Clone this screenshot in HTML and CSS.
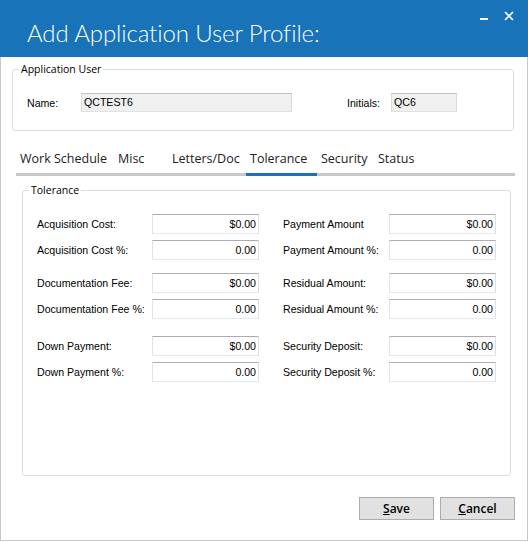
FILE: index.html
```html
<!DOCTYPE html>
<html>
<head>
    <title>Add Application User Profile</title>
    <meta charset='UTF-8'>
    <link rel="stylesheet" href="styles.css">
</head>
<body>
    <div class='window'>
        <div class='titlebar'>
            <h1 class='title'>Add Application User Profile:</h1>
            <div class='controls'>
                <span class='ctl-min'></span>
                <svg class='ctl-close' width='10' height='10' viewBox='0 0 10 10'>
                    <path d='M1 1 L9 9 M9 1 L1 9' stroke='#fff' stroke-width='1.7' fill='none'/>
                </svg>
            </div>
        </div>

        <fieldset class='group group-user'>
            <legend>Application User</legend>
            <div class='user-row'>
                <label class='lbl lbl-name'>Name:</label>
                <div class='field field-ro field-name'>QCTEST6</div>
                <label class='lbl lbl-initials'>Initials:</label>
                <div class='field field-ro field-initials'>QC6</div>
            </div>
        </fieldset>

        <div class='tabs'>
            <span class='tab tab-work'>Work Schedule</span>
            <span class='tab tab-misc'>Misc</span>
            <span class='tab tab-letters'>Letters/Doc</span>
            <span class='tab tab-tol tab-active'>Tolerance</span>
            <span class='tab tab-sec'>Security</span>
            <span class='tab tab-status'>Status</span>
        </div>

        <fieldset class='group group-tol'>
            <legend>Tolerance</legend>
            <div class='tol-body'>
                <div class='tol-group'>
                    <div class='tol-row'>
                        <label class='lbl lbl-left'>Acquisition Cost:</label>
                        <div class='field'>$0.00</div>
                        <label class='lbl lbl-right'>Payment Amount</label>
                        <div class='field'>$0.00</div>
                    </div>
                    <div class='tol-row'>
                        <label class='lbl lbl-left'>Acquisition Cost %:</label>
                        <div class='field'>0.00</div>
                        <label class='lbl lbl-right'>Payment Amount %:</label>
                        <div class='field'>0.00</div>
                    </div>
                </div>
                <div class='tol-group tol-group-2'>
                    <div class='tol-row'>
                        <label class='lbl lbl-left'>Documentation Fee:</label>
                        <div class='field'>$0.00</div>
                        <label class='lbl lbl-right'>Residual Amount:</label>
                        <div class='field'>$0.00</div>
                    </div>
                    <div class='tol-row'>
                        <label class='lbl lbl-left'>Documentation Fee %:</label>
                        <div class='field'>0.00</div>
                        <label class='lbl lbl-right'>Residual Amount %:</label>
                        <div class='field'>0.00</div>
                    </div>
                </div>
                <div class='tol-group tol-group-3'>
                    <div class='tol-row'>
                        <label class='lbl lbl-left'>Down Payment:</label>
                        <div class='field'>$0.00</div>
                        <label class='lbl lbl-right'>Security Deposit:</label>
                        <div class='field'>$0.00</div>
                    </div>
                    <div class='tol-row'>
                        <label class='lbl lbl-left'>Down Payment %:</label>
                        <div class='field'>0.00</div>
                        <label class='lbl lbl-right'>Security Deposit %:</label>
                        <div class='field'>0.00</div>
                    </div>
                </div>
            </div>
        </fieldset>

        <div class='buttons'>
            <button class='btn'><u>S</u>ave</button>
            <button class='btn'><u>C</u>ancel</button>
        </div>
    </div>
</body>
</html>
```

FILE: styles.css
```css
body { margin: 0; background: #fff; font-family: "Liberation Sans", Arial, sans-serif; font-size: 10.6px; color: #000; }

.window {
    width: 528px;
    height: 541px;
    box-sizing: border-box;
    border: 1px solid #c9c9c9;
    border-top: 0;
}

/* title bar */
.titlebar { height: 57px; margin: 0 -1px; background: #1873b9; display: flex; justify-content: space-between; }
.title { margin: 0; padding: 21px 0 0 27px; font: 300 24px/24px Lato, "Open Sans", sans-serif; letter-spacing: -0.1px; color: #fff; }
.controls { display: flex; align-items: flex-start; gap: 16px; padding: 11px 14px 0 0; }
.ctl-min { width: 8px; height: 2px; margin-top: 7px; background: #fff; }
.ctl-close { display: block; }

/* group boxes */
.group { margin: 0; padding: 0; min-width: 0; border: 1px solid #d5dfe5; border-radius: 3px; }
.group legend { margin-left: 6px; padding: 0 2px; font: 10.5px/14px "Open Sans", sans-serif; }
.group-user { margin: 5px 13px 0 11px; }
.group-tol { margin: 7px 16px 0 21px; }

.user-row { display: flex; align-items: center; padding: 17px 0 18px 14px; }
.lbl-name { width: 54px; }
.lbl-initials { width: 44px; margin-left: 55px; }

/* text boxes */
.field {
    height: 20px;
    box-sizing: border-box;
    width: 107px;
    padding: 0 2px;
    line-height: 18px;
    text-align: right;
    background: #fff;
    border: 1px solid;
    border-color: #abadb3 #dbdfe6 #e3e9ef #e2e3ea;
}
.field-ro { height: 19px; line-height: 17px; text-align: left; background: #f0f0f0; border-color: #c4c4c4 #dadada #e2e2e2 #dadada; }
.field-name { width: 211px; }
.field-initials { width: 66px; }

/* tabs */
.tabs { display: flex; margin: 14px 12px 0 15px; border-bottom: 3px solid #c8c8c8; font: 12.5px/28px "Open Sans", sans-serif; color: #222; }
.tab { box-sizing: border-box; padding-left: 4px; }
.tab-work { width: 98px; }
.tab-misc { width: 54px; }
.tab-letters { width: 78px; }
.tab-tol { width: 71px; }
.tab-sec { width: 57px; }
.tab-active { border-bottom: 3px solid #1873b9; margin-bottom: -3px; }

/* tolerance rows */
.tol-body { padding: 17px 0 93px 14px; }
.tol-group-2 { margin-top: 13px; }
.tol-group-3 { margin-top: 17px; }
.tol-row { display: flex; align-items: center; }
.tol-row + .tol-row { margin-top: 6px; }
.lbl-left { width: 115px; }
.lbl-right { width: 106px; margin-left: 24px; }

/* buttons */
.buttons { display: flex; justify-content: flex-end; gap: 6px; margin: 21px 12px 0 0; }
.btn {
    width: 75px;
    height: 23px;
    padding: 0;
    background: #e1e1e1;
    border: 1px solid #adadad;
    font: 600 12px "Open Sans", sans-serif;
    color: #000;
}
```
